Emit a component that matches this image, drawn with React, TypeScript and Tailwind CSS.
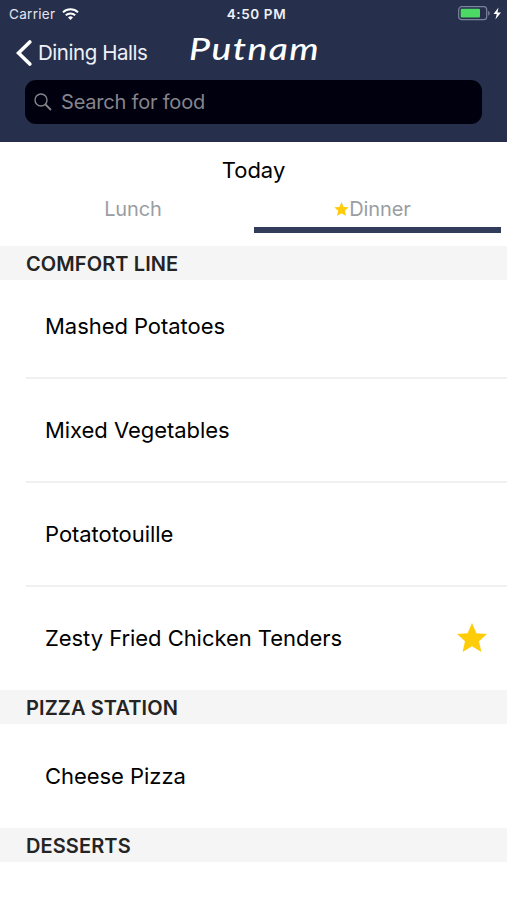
import { ReactNode } from 'react';

interface FoodItem {
  name: string;
  favorite?: boolean;
}

interface Station {
  title: string;
  items: FoodItem[];
}

const stations: Station[] = [
  {
    title: 'COMFORT LINE',
    items: [
      { name: 'Mashed Potatoes' },
      { name: 'Mixed Vegetables' },
      { name: 'Potatotouille' },
      { name: 'Zesty Fried Chicken Tenders', favorite: true },
    ],
  },
  { title: 'PIZZA STATION', items: [{ name: 'Cheese Pizza' }] },
  { title: 'DESSERTS', items: [] },
];

function Star({ className }: { className: string }) {
  return (
    <svg viewBox="0 0 30 29" className={className} fill="#ffcc0a">
      <path d="M15 0l4.400 10.200L30 11.100l-8 7.100L24.400 29 15 23.300 5.600 29 8 18.200l-8-7.100 10.600-.9z" />
    </svg>
  );
}

function StatusBar() {
  return (
    <div className="h-7 pl-[9px] pr-[5px] flex items-center justify-between text-[13.5px] relative">
      <div className="flex items-center gap-[7px]">
        <span className="text-[#e3e6ef] tracking-[0.3px]">Carrier</span>
        <svg viewBox="0 0 17 12" className="w-[17px] h-3 -mt-px" fill="none" stroke="white" strokeWidth="2">
          <path d="M1 4.4a10.8 10.8 0 0 1 15 0" />
          <path d="M3.8 7.3a6.8 6.8 0 0 1 9.4 0" />
          <path d="M8.5 12L6 9.5a3.6 3.6 0 0 1 5 0z" fill="white" stroke="none" />
        </svg>
      </div>
      <span className="absolute left-1/2 -translate-x-1/2 ml-[3px] font-semibold text-[13.5px] tracking-[0.6px] whitespace-nowrap text-[#eef0f7]">
        4:50 PM
      </span>
      <svg viewBox="0 0 44 16" className="w-11 h-4 -mt-0.5" fill="none">
        <rect x="0.7" y="1.7" width="28" height="13" rx="3" stroke="#7d849a" strokeWidth="1.2" />
        <rect x="2.7" y="3.8" width="19.3" height="8.8" rx="1" fill="#4cd964" />
        <path d="M30.2 6c2 .6 2 4 0 4.600z" fill="#7d849a" />
        <path d="M40.500 2.500L35.500 9h3.300l-1.400 5.500L43 7.400h-3.500z" fill="white" />
      </svg>
    </div>
  );
}

function NavBar() {
  return (
    <div className="h-[52px] pl-4 flex items-center relative">
      <button className="flex items-center gap-[6px] -mt-[3px]">
        <svg viewBox="0 0 16 26" className="w-4 h-[26px]" fill="none" stroke="white" strokeWidth="3.6" strokeLinecap="round">
          <path d="M13.800 2L2.500 13l11.300 11" />
        </svg>
        <span className="text-[20.5px] tracking-[-0.45px] text-[#eef0f7] pt-px">Dining Halls</span>
      </button>
      <h1 className="absolute left-[189px] top-0 origin-left scale-x-120 font-['Bradley_Hand','Lato',cursive] italic font-medium text-[31px] leading-[41px] tracking-[1.2px]">
        Putnam
      </h1>
    </div>
  );
}

function SearchBar() {
  return (
    <div className="mx-[25px] h-11 rounded-[11px] bg-[#00000f] flex items-center pl-[9px] gap-[9px] text-[#85858c]">
      <svg viewBox="0 0 18 18" className="w-[18px] h-[18px]" fill="none" stroke="currentColor" strokeWidth="1.4">
        <circle cx="7" cy="7" r="6" />
        <path d="M11.500 11.500l5.500 5.500" strokeWidth="1.800" />
      </svg>
      <span className="text-[20px] tracking-[-0.2px]">Search for food</span>
    </div>
  );
}

interface MealTabProps {
  active?: boolean;
  className: string;
  children: ReactNode;
}

function MealTab({ active, className, children }: MealTabProps) {
  return (
    <button
      className={`w-[247px] h-12 pt-[6px] flex items-center justify-center text-[20px] tracking-[-0.1px] text-[#9a9ea3] border-b-[6px] ${
        active ? 'border-[#313d5a]' : 'border-transparent'
      } ${className}`}
    >
      {children}
    </button>
  );
}

function StationSection({ station, first }: { station: Station; first: boolean }) {
  return (
    <section>
      <h2 className="h-[34px] bg-[#f5f5f5] pl-[26px] leading-[36px] text-[20px] tracking-[0.1px] font-semibold text-[#242424]">
        {station.title}
      </h2>
      <ul className="pl-[26px]">
        {station.items.map((item, i) => (
          <li
            key={item.name}
            className={`pl-[19px] pr-5 flex items-center justify-between text-[22px] tracking-[-0.05px] ${
              first && i === 0 ? 'h-[99px] pb-[5px]' : first && i === 3 ? 'h-[103px] pb-px' : 'h-26'
            } ${i < station.items.length - 1 ? 'border-b-2 border-[#f0f0f0]' : ''}`}
          >
            <span>{item.name}</span>
            {item.favorite && <Star className="w-[30px] h-[29px] mb-[2px]" />}
          </li>
        ))}
      </ul>
    </section>
  );
}

export default function App() {
  return (
    <div className="w-[507px] h-[900px] overflow-hidden bg-white font-['Inter',sans-serif] text-black">
      <header className="h-[142px] bg-[#26304d] text-white">
        <StatusBar />
        <NavBar />
        <SearchBar />
      </header>
      <div className="h-[104px]">
        <p className="pt-[12px] h-[43px] text-center text-[22px] leading-[33px]">Today</p>
        <div className="flex pl-[7px]">
          <MealTab className="pl-[5px]">Lunch</MealTab>
          <MealTab active className="pr-[10px]">
            <Star className="w-[15px] h-[14px]" />
            Dinner
          </MealTab>
        </div>
      </div>
      {stations.map((station, i) => (
        <StationSection key={station.title} station={station} first={i === 0} />
      ))}
    </div>
  );
}
